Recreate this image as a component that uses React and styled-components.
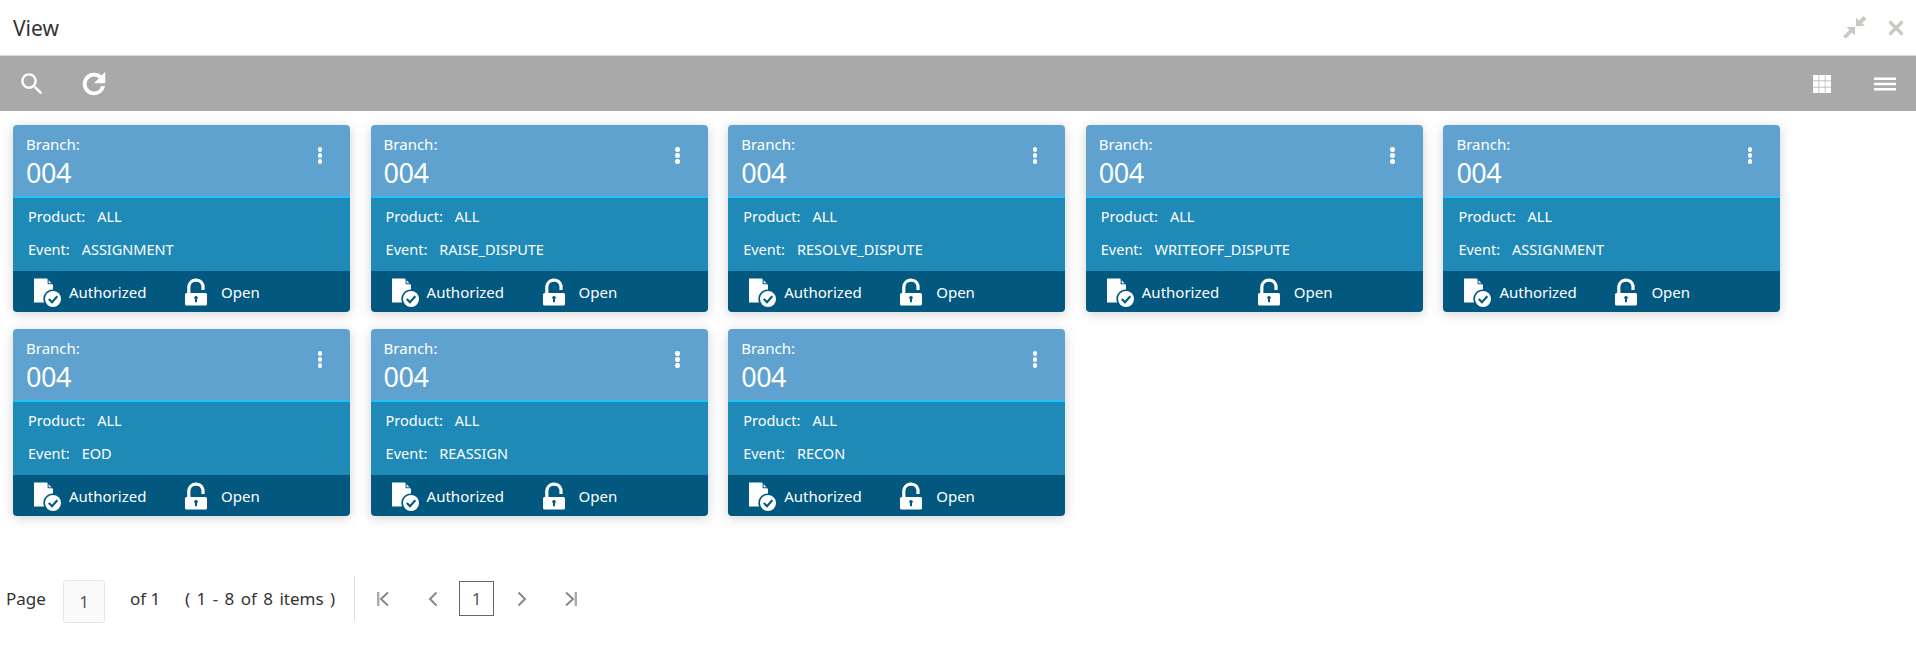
import React from 'react'
import styled, { createGlobalStyle } from 'styled-components'

const GlobalStyle = createGlobalStyle`
  *, *::before, *::after {
    box-sizing: border-box;
  }
  html, body {
    margin: 0;
    padding: 0;
    background: #fff;
    font-family: "Noto Sans", "Open Sans", sans-serif;
  }
`

const Page = styled.div`
  width: 1916px;
  height: 646px;
  overflow: hidden;
  display: flex;
  flex-direction: column;
`

const TitleBar = styled.header`
  height: 56px;
  flex: none;
  display: flex;
  align-items: center;
  justify-content: space-between;
  padding: 0 12px 0 13px;
  border-bottom: 1px solid #dcdcdc;
`

const Title = styled.h1`
  margin: 0;
  font-size: 21px;
  font-weight: 400;
  color: #333;
`

const WindowActions = styled.div`
  display: flex;
  align-items: center;
  gap: 21px;
`

const Toolbar = styled.div`
  height: 55px;
  flex: none;
  background: #a9a9a9;
  display: flex;
  align-items: center;
  justify-content: space-between;
  padding: 0 20px;
`

const ToolGroup = styled.div`
  display: flex;
  align-items: center;
  gap: ${p => p.$gap}px;
`

const Cards = styled.div`
  display: flex;
  flex-wrap: wrap;
  gap: 17px 20.6px;
  padding: 14px 13px 0;
  height: 465px;
  align-content: flex-start;
  flex: none;
`

const Card = styled.article`
  width: 337px;
  height: 187px;
  border-radius: 4px;
  overflow: hidden;
  display: flex;
  flex-direction: column;
  box-shadow: 0 2px 12px rgba(0, 0, 0, 0.18);
  color: #fff;
`

const CardHead = styled.div`
  height: 73px;
  flex: none;
  background: #5fa2d0;
  border-bottom: 2px solid #1fc0f7;
  display: flex;
  justify-content: space-between;
  padding: 9px 28px 0 13px;
`

const BranchLabel = styled.div`
  font-size: 15px;
  line-height: 20px;
`

const BranchValue = styled.div`
  font-size: 27px;
  line-height: 38px;
  letter-spacing: -0.5px;
`

const MenuDots = styled.div`
  display: flex;
  flex-direction: column;
  gap: 1.5px;
  margin-top: 13px;
`

const Dot = styled.span`
  width: 4.5px;
  height: 4.5px;
  border-radius: 50%;
  background: #fff;
`

const CardBody = styled.div`
  flex: 1;
  background: #1f89b8;
  padding: 2px 15px 0;
  font-size: 14.5px;
`

const Field = styled.div`
  height: 33px;
  line-height: 33px;
  display: flex;
  gap: 12px;
`

const CardFoot = styled.div`
  height: 41px;
  flex: none;
  background: #02587f;
  display: flex;
  align-items: center;
  padding-left: 19px;
  font-size: 15px;
`

const Status = styled.div`
  display: flex;
  align-items: center;
  gap: ${p => p.$gap}px;
  width: ${p => (p.$width ? `${p.$width}px` : 'auto')};
`

const Pager = styled.nav`
  display: flex;
  align-items: center;
  height: 45px;
  padding-left: 6px;
  font-size: 17px;
  color: #333;
`

const PageLabel = styled.span`
  width: 57px;
`

const PageInput = styled.div`
  width: 42px;
  height: 43px;
  align-self: flex-start;
  margin: 4px 25px 0 0;
  border: 1px solid #e6e6e6;
  border-radius: 3px;
  background: #fafafa;
  display: flex;
  align-items: center;
  justify-content: center;
  color: #555;
`

const PageCount = styled.span`
  width: 55px;
`

const Range = styled.span`
  width: 169px;
  word-spacing: 2px;
  white-space: nowrap;
`

const Divider = styled.span`
  width: 1px;
  height: 45px;
  background: #ddd;
  margin-right: 22px;
`

const PagerButton = styled.span`
  display: flex;
  margin-right: ${p => p.$after}px;
`

const CurrentPage = styled.span`
  width: 35px;
  height: 35px;
  border: 1px solid #666;
  display: flex;
  align-items: center;
  justify-content: center;
  margin-right: 23px;
  color: #555;
`

const Icon = ({ w, h, box, children }) => (
  <svg width={w} height={h || w} viewBox={box || `0 0 ${w} ${h || w}`} style={{ display: 'block' }}>
    {children}
  </svg>
)

const SearchIcon = () => (
  <Icon w={24} box="2 2 20 20">
    <path
      fill="#fff"
      d="M15.5 14h-.79l-.28-.27C15.41 12.59 16 11.11 16 9.5 16 5.91 13.09 3 9.5 3S3 5.91 3 9.5 5.91 16 9.5 16c1.61 0 3.09-.59 4.23-1.57l.27.28v.79l5 4.99L20.49 19l-4.99-5zm-6 0C7.01 14 5 11.99 5 9.5S7.01 5 9.5 5 14 7.01 14 9.5 11.99 14 9.5 14z"
    />
  </Icon>
)

const RefreshIcon = () => (
  <Icon w={24} box="3 3 18 18">
    <path
      fill="#fff"
      stroke="#fff"
      strokeWidth=".9"
      d="M17.65 6.35C16.2 4.9 14.21 4 12 4c-4.42 0-7.99 3.58-7.99 8s3.57 8 7.99 8c3.73 0 6.84-2.55 7.73-6h-2.08c-.82 2.33-3.04 4-5.65 4-3.31 0-6-2.69-6-6s2.69-6 6-6c1.66 0 3.14.69 4.22 1.78L13 11h7V4l-2.35 2.35z"
    />
  </Icon>
)

const GridIcon = () => (
  <Icon w={20}>
    <path
      fill="#fff"
      d="M1 1h5.6v5.6H1zM7.2 1h5.6v5.6H7.2zM13.4 1H19v5.6h-5.6zM1 7.2h5.6v5.6H1zM7.2 7.2h5.6v5.6H7.2zM13.4 7.2H19v5.6h-5.6zM1 13.4h5.6V19H1zM7.2 13.4h5.6V19H7.2zM13.4 13.4H19V19h-5.6z"
    />
  </Icon>
)

const MenuIcon = () => (
  <Icon w={22} h={14}>
    <path fill="#fff" d="M0 .5h22v2.4H0zM0 5.8h22v2.4H0zM0 11.1h22v2.4H0z" />
  </Icon>
)

const CollapseIcon = () => (
  <Icon w={24}>
    <path fill="#cbc8c0" d="M0 20.5 L6.5 14 L3.5 11 H12 V19.5 L9 16.5 L3 22.5 Z" />
    <path fill="#cbc8c0" d="M13 10 V1.5 L16 4.5 L20.5 0 L23.5 3 L19 7 L22 10 Z" />
  </Icon>
)

const CloseIcon = () => (
  <Icon w={16}>
    <path d="M1.5 1.5 L14.5 14.5 M14.5 1.5 L1.5 14.5" stroke="#cbc8c0" strokeWidth="3.2" />
  </Icon>
)

const AuthorizedIcon = () => (
  <Icon w={30}>
    <path fill="#fff" d="M2 1.5 H15 L21 8 V12.5 A9.5 9.5 0 0 0 12 25.5 H2 Z" />
    <path d="M15.6 1.8 L20.6 7.3 H15.6 Z" fill="#02587f" />
    <path d="M16.6 3.2 L19.4 6.3 H16.6 Z" fill="#fff" />
    <circle cx="21" cy="22" r="8" fill="#fff" />
    <path d="M16.8 22 L20 25.3 L25.3 19.3" fill="none" stroke="#02587f" strokeWidth="2.1" />
  </Icon>
)

const LockIcon = () => (
  <Icon w={24} h={28}>
    <path d="M4.8 15 V9 A7.2 7.2 0 0 1 19 7.6 V12" fill="none" stroke="#fff" strokeWidth="3.2" />
    <rect x="1" y="15" width="22" height="12.5" rx="1.5" fill="#fff" />
    <circle cx="12" cy="19.8" r="1.8" fill="#02587f" />
    <rect x="11" y="19.8" width="2" height="4.4" fill="#02587f" />
  </Icon>
)

const FirstIcon = () => (
  <Icon w={12} h={16}>
    <path d="M1.2 1v14" stroke="#aaa" strokeWidth="2.4" />
    <path d="M11 1.5 L4 8 L11 14.5" fill="none" stroke="#888" strokeWidth="2" />
  </Icon>
)

const PrevIcon = () => (
  <Icon w={10} h={16}>
    <path d="M8.5 1.5 L2 8 L8.5 14.5" fill="none" stroke="#888" strokeWidth="2" />
  </Icon>
)

const NextIcon = () => (
  <Icon w={10} h={16}>
    <path d="M1.5 1.5 L8 8 L1.5 14.5" fill="none" stroke="#888" strokeWidth="2" />
  </Icon>
)

const LastIcon = () => (
  <Icon w={12} h={16}>
    <path d="M1 1.5 L8 8 L1 14.5" fill="none" stroke="#888" strokeWidth="2" />
    <path d="M10.8 1v14" stroke="#aaa" strokeWidth="2.4" />
  </Icon>
)

const events = [
  'ASSIGNMENT',
  'RAISE_DISPUTE',
  'RESOLVE_DISPUTE',
  'WRITEOFF_DISPUTE',
  'ASSIGNMENT',
  'EOD',
  'REASSIGN',
  'RECON',
]

function App() {
  return (
    <Page>
      <GlobalStyle />
      <TitleBar>
        <Title>View</Title>
        <WindowActions>
          <CollapseIcon />
          <CloseIcon />
        </WindowActions>
      </TitleBar>
      <Toolbar>
        <ToolGroup $gap={38}>
          <SearchIcon />
          <RefreshIcon />
        </ToolGroup>
        <ToolGroup $gap={42}>
          <GridIcon />
          <MenuIcon />
        </ToolGroup>
      </Toolbar>
      <Cards>
        {events.map((event, i) => (
          <Card key={i}>
            <CardHead>
              <div>
                <BranchLabel>Branch:</BranchLabel>
                <BranchValue>004</BranchValue>
              </div>
              <MenuDots>
                <Dot />
                <Dot />
                <Dot />
              </MenuDots>
            </CardHead>
            <CardBody>
              <Field>
                <span>Product:</span>
                <span>ALL</span>
              </Field>
              <Field>
                <span>Event:</span>
                <span>{event}</span>
              </Field>
            </CardBody>
            <CardFoot>
              <Status $gap={7} $width={152}>
                <AuthorizedIcon />
                Authorized
              </Status>
              <Status $gap={13}>
                <LockIcon />
                Open
              </Status>
            </CardFoot>
          </Card>
        ))}
      </Cards>
      <Pager>
        <PageLabel>Page</PageLabel>
        <PageInput>1</PageInput>
        <PageCount>of 1</PageCount>
        <Range>( 1 - 8 of 8 items )</Range>
        <Divider />
        <PagerButton $after={39}><FirstIcon /></PagerButton>
        <PagerButton $after={21}><PrevIcon /></PagerButton>
        <CurrentPage>1</CurrentPage>
        <PagerButton $after={38}><NextIcon /></PagerButton>
        <PagerButton $after={0}><LastIcon /></PagerButton>
      </Pager>
    </Page>
  )
}

export default App
